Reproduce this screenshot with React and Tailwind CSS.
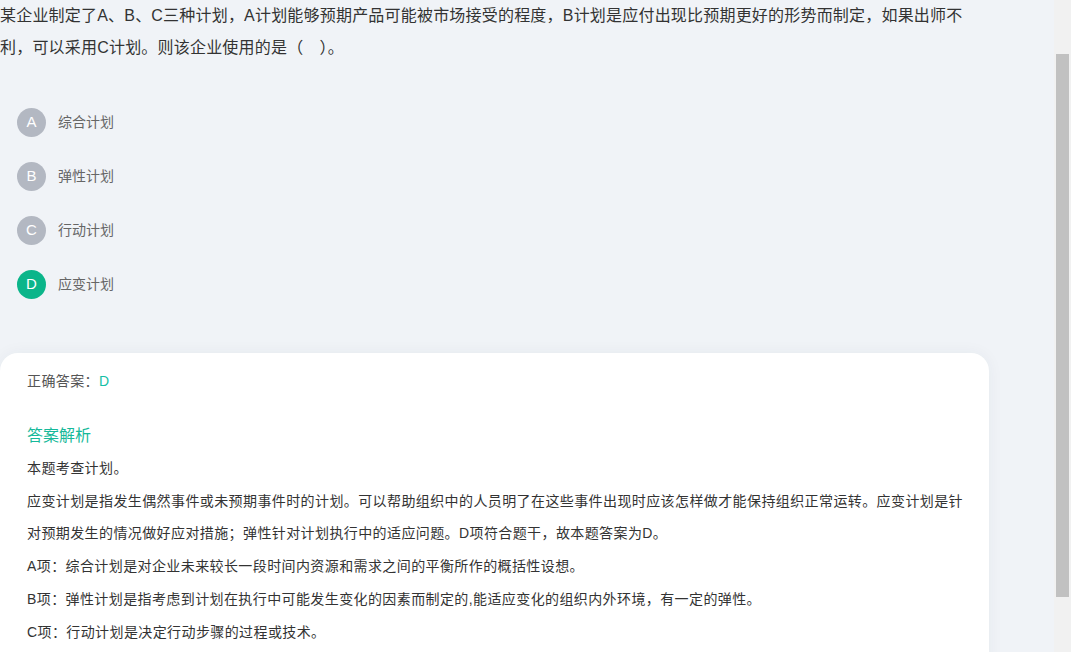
import React from 'react'

const options = [
  { key: 'A', text: '综合计划' },
  { key: 'B', text: '弹性计划' },
  { key: 'C', text: '行动计划' },
  { key: 'D', text: '应变计划', correct: true },
]

export default function App() {
  return (
    <div
      className="flex h-[652px] w-[1071px] overflow-hidden bg-[#f0f3f7]"
      style={{ fontFamily: '"Liberation Sans", "Noto Sans CJK SC", sans-serif' }}
    >
      <main className="relative flex-1 overflow-hidden">
        {/* 题干 */}
        <div className="w-[1010px] text-[16px] leading-[32px] tracking-[0.2px] text-[#333]">
          某企业制定了A、B、C三种计划，A计划能够预期产品可能被市场接受的程度，B计划是应付出现比预期更好的形势而制定，如果出师不
          <br />
          利，可以采用C计划。则该企业使用的是（　）。
        </div>

        {/* 选项 */}
        <ul className="mt-[31px] pl-[17px]">
          {options.map((o) => (
            <li key={o.key} className="flex h-[54px] items-center gap-3">
              <span
                className={
                  o.correct
                    ? 'flex h-[29px] w-[29px] items-center justify-center rounded-full bg-[#0bb58a] text-[15px] text-white'
                    : 'flex h-[29px] w-[29px] items-center justify-center rounded-full bg-[#b3b8c2] text-[15px] text-white'
                }
              >
                {o.key}
              </span>
              <span className="text-[14px] text-[#666]">{o.text}</span>
            </li>
          ))}
        </ul>

        {/* 答案卡片 */}
        <section className="mt-[42px] h-[320px] w-[989px] rounded-[18px] bg-white pl-[27px] pt-[18px] shadow-[0_0_16px_rgba(30,50,80,0.05)]">
          <p className="text-[14px] leading-[20px] tracking-[0.4px] text-[#555]">
            正确答案：<span className="text-[#15bfa6]">D</span>
          </p>

          <h3 className="mt-[33px] mb-[4px] text-[16px] leading-[24px] text-[#16b99a]">答案解析</h3>

          <div className="w-[950px] text-[14px] leading-[32px] tracking-[0.4px] text-[#333]">
            <p>本题考查计划。</p>
            <p className="mt-px">
              应变计划是指发生偶然事件或未预期事件时的计划。可以帮助组织中的人员明了在这些事件出现时应该怎样做才能保持组织正常运转。应变计划是针
              <br />
              对预期发生的情况做好应对措施；弹性针对计划执行中的适应问题。D项符合题干，故本题答案为D。
            </p>
            <p className="mt-px">A项：综合计划是对企业未来较长一段时间内资源和需求之间的平衡所作的概括性设想。</p>
            <p className="mt-px">B项：弹性计划是指考虑到计划在执行中可能发生变化的因素而制定的,能适应变化的组织内外环境，有一定的弹性。</p>
            <p className="mt-px">C项：行动计划是决定行动步骤的过程或技术。</p>
          </div>
        </section>
      </main>

      {/* 滚动条 */}
      <div className="flex w-[17px] flex-col bg-[#f1f1f1] px-[2px] pt-[54px]">
        <div className="h-[543px] w-full bg-[#c1c1c1]" />
      </div>
    </div>
  )
}
